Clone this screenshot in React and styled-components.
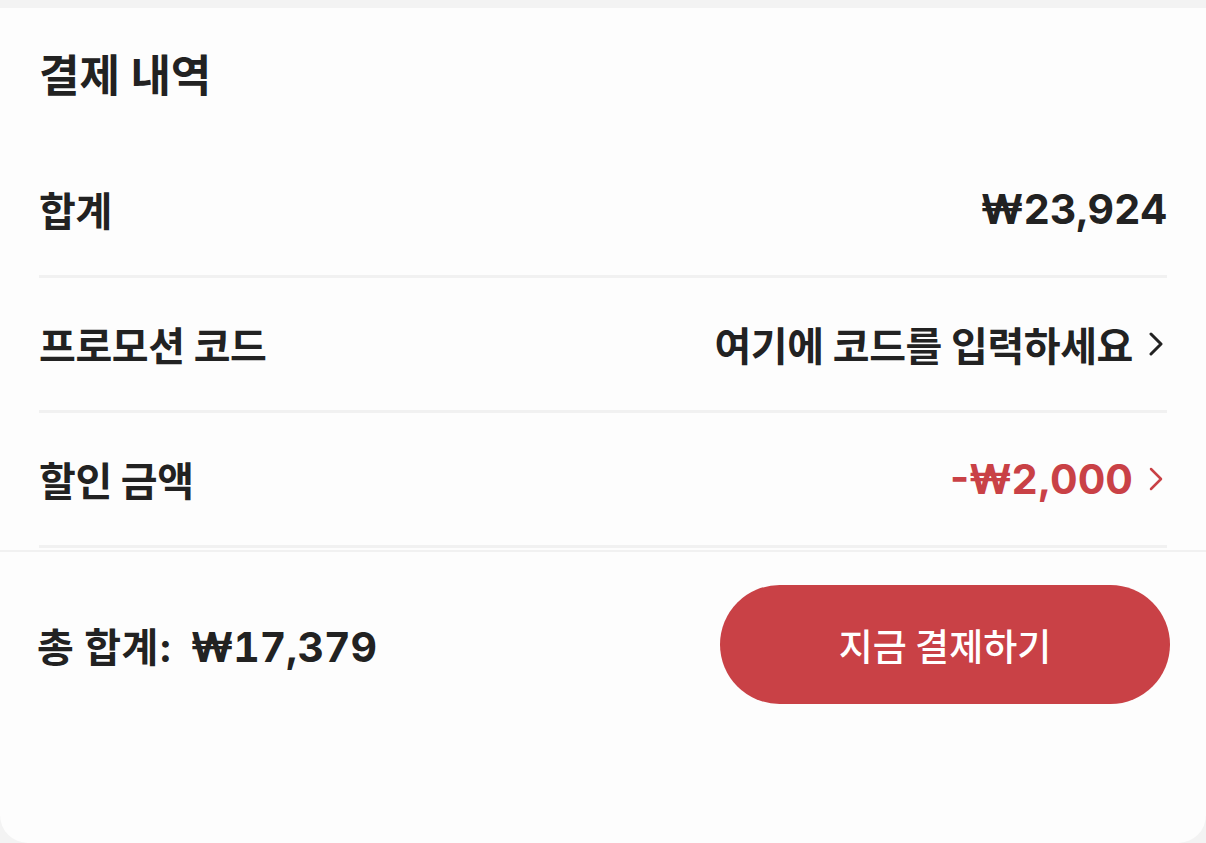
import React from 'react';
import styled, { createGlobalStyle } from 'styled-components';

const GlobalStyle = createGlobalStyle`
  html, body {
    margin: 0;
    padding: 0;
    background: #f3f3f3;
  }
  body {
    font-family: Inter, "Noto Sans CJK KR", sans-serif;
    color: #222;
  }
`;

const Sheet = styled.div`
  margin-top: 8px;
  height: 835px;
  background: #fdfdfd;
  border-radius: 0 0 28px 28px;
  display: flex;
  flex-direction: column;
`;

const Header = styled.div`
  height: 135px;
  padding: 0 39px 6px;
  display: flex;
  align-items: center;
  box-sizing: border-box;
`;

const Title = styled.h2`
  margin: 0;
  font-size: 44px;
  font-weight: 700;
`;

const List = styled.div`
  padding: 0 39px;
  display: flex;
  flex-direction: column;
`;

const Row = styled.div`
  height: 132px;
  border-bottom: 3px solid #f1f1f1;
  display: flex;
  align-items: center;
  justify-content: space-between;
`;

const Label = styled.span`
  font-size: 40px;
  font-weight: 700;
  letter-spacing: -0.4px;
`;

const Value = styled.div`
  display: flex;
  align-items: center;
  gap: 16px;
  color: ${p => (p.$danger ? '#c94146' : '#222')};
`;

const Hint = styled.span`
  font-size: 40px;
  font-weight: 700;
  letter-spacing: -0.4px;
`;

const Amount = styled.span`
  font-size: 41px;
  font-weight: 700;
  font-variant-numeric: ${p => (p.$tabular ? 'tabular-nums' : 'normal')};
`;

const Footer = styled.div`
  margin-top: 2px;
  border-top: 2px solid #f1f1f1;
  padding: 33px 36px 0 37px;
  display: flex;
  align-items: center;
  justify-content: space-between;
`;

const Total = styled.div`
  display: flex;
  align-items: baseline;
  gap: 18px;
`;

const TotalLabel = styled.span`
  font-size: 40px;
  font-weight: 700;
  letter-spacing: 0.5px;
`;

const PayButton = styled.button`
  width: 450px;
  height: 119px;
  border: none;
  border-radius: 60px;
  background: #c94146;
  color: #fff;
  font-family: "Noto Sans CJK KR", sans-serif;
  font-size: 37px;
  font-weight: 500;
  cursor: pointer;
`;

const Chevron = ({ color = '#222', width = 3 }) => (
  <svg width="18" height="26" viewBox="0 0 18 26" fill="none">
    <polyline
      points="2,3 12,13 2,23"
      stroke={color}
      strokeWidth={width}
      strokeLinecap="round"
      strokeLinejoin="round"
    />
  </svg>
);

export default function App() {
  return (
    <>
      <GlobalStyle />
      <Sheet>
        <Header>
          <Title>결제 내역</Title>
        </Header>
        <List>
          <Row>
            <Label>합계</Label>
            <Value>
              <Amount $tabular>₩23,924</Amount>
            </Value>
          </Row>
          <Row>
            <Label>프로모션 코드</Label>
            <Value>
              <Hint>여기에 코드를 입력하세요</Hint>
              <Chevron />
            </Value>
          </Row>
          <Row>
            <Label>할인 금액</Label>
            <Value $danger>
              <Amount>-₩2,000</Amount>
              <Chevron color="#c94146" width={2.5} />
            </Value>
          </Row>
        </List>
        <Footer>
          <Total>
            <TotalLabel>총 합계:</TotalLabel>
            <Amount $tabular>₩17,379</Amount>
          </Total>
          <PayButton>지금 결제하기</PayButton>
        </Footer>
      </Sheet>
    </>
  );
}
